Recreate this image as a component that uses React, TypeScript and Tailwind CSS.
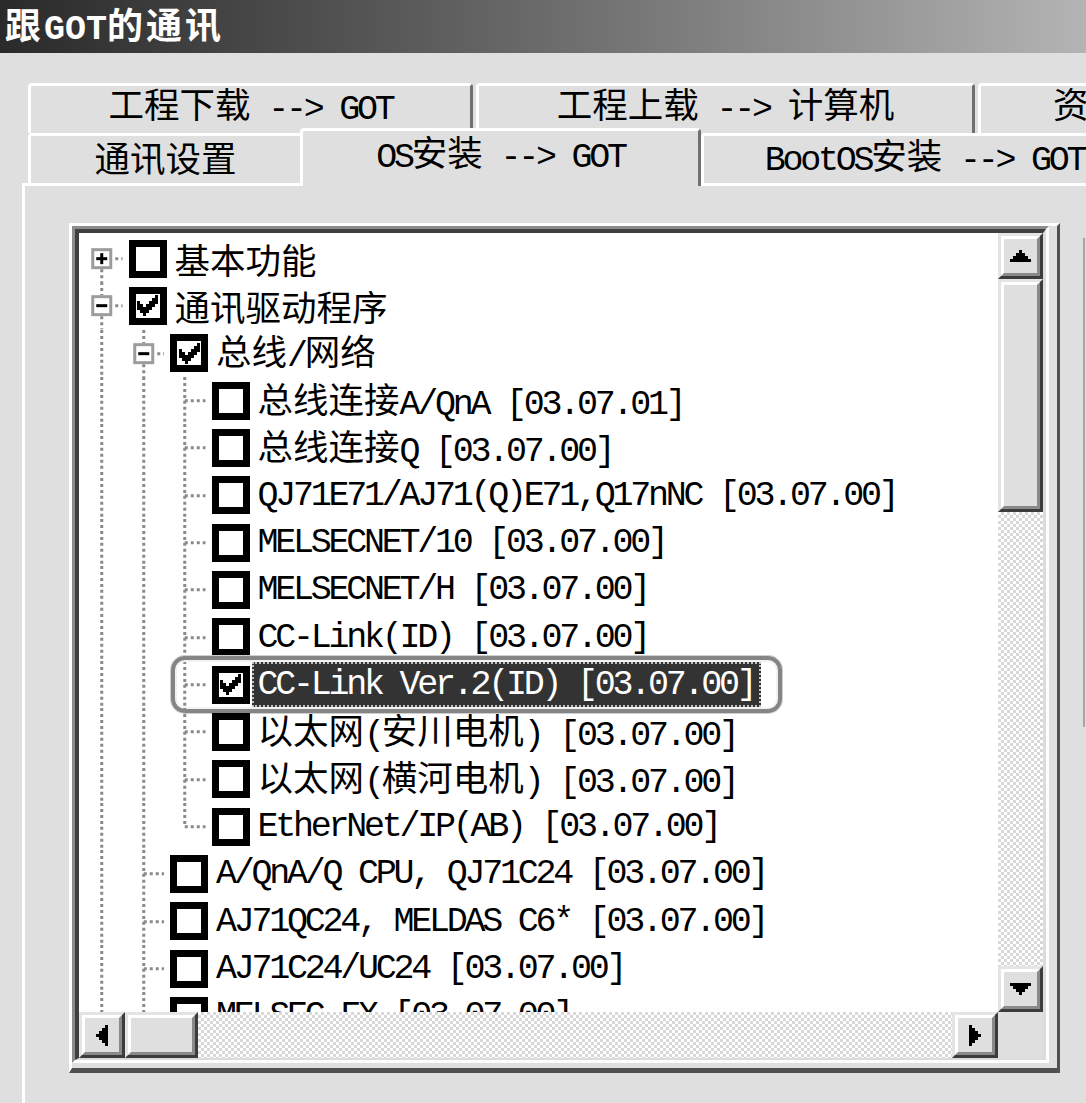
import React from "react";

const CJK_RE = /([\u2E80-\u9FFF\uF900-\uFAFF\uFF00-\uFFEF\u3000-\u303F]+)/;

function Txt({ s, cjk, lat }: { s: string; cjk: string; lat: string }) {
  const parts = s.split(CJK_RE).filter((p) => p.length > 0);
  return (
    <span className="whitespace-pre">
      {parts.map((p, i) =>
        CJK_RE.test(p) ? (
          <span key={i} className={cjk}>
            {p}
          </span>
        ) : (
          <span key={i} className={lat}>
            {p}
          </span>
        )
      )}
    </span>
  );
}

const TC = "font-['Noto_Sans_CJK_SC',sans-serif] text-[35.5px]";
const TL = "font-['Liberation_Mono',monospace] text-[35px] tracking-[-3.25px] relative top-[1px]";

type G = { up?: boolean; down?: boolean; stub?: boolean; box?: "+" | "-" };
const FULL: G = { up: true, down: true };
const TEE: G = { up: true, down: true, stub: true };
const END: G = { up: true, stub: true };
type R = { g: G[]; c?: boolean; t: string; sel?: boolean };

const ROWS: R[] = [
  { g: [{ down: true, stub: true, box: "+" }], t: "基本功能" },
  { g: [{ up: true, down: true, stub: true, box: "-" }], c: true, t: "通讯驱动程序" },
  { g: [FULL, { up: true, down: true, stub: true, box: "-" }], c: true, t: "总线/网络" },
  { g: [FULL, FULL, TEE], t: "总线连接A/QnA [03.07.01]" },
  { g: [FULL, FULL, TEE], t: "总线连接Q [03.07.00]" },
  { g: [FULL, FULL, TEE], t: "QJ71E71/AJ71(Q)E71,Q17nNC [03.07.00]" },
  { g: [FULL, FULL, TEE], t: "MELSECNET/10 [03.07.00]" },
  { g: [FULL, FULL, TEE], t: "MELSECNET/H [03.07.00]" },
  { g: [FULL, FULL, TEE], t: "CC-Link(ID) [03.07.00]" },
  { g: [FULL, FULL, TEE], c: true, t: "CC-Link Ver.2(ID) [03.07.00]", sel: true },
  { g: [FULL, FULL, TEE], t: "以太网(安川电机) [03.07.00]" },
  { g: [FULL, FULL, TEE], t: "以太网(横河电机) [03.07.00]" },
  { g: [FULL, FULL, END], t: "EtherNet/IP(AB) [03.07.00]" },
  { g: [FULL, TEE], t: "A/QnA/Q CPU, QJ71C24 [03.07.00]" },
  { g: [FULL, TEE], t: "AJ71QC24, MELDAS C6* [03.07.00]" },
  { g: [FULL, TEE], t: "AJ71C24/UC24 [03.07.00]" },
  { g: [FULL, TEE], t: "MELSEC-FX [03.07.00]" },
];

function Guide({ g }: { g: G }) {
  const W = 41.5,
    H = 47.33,
    cx = 20.75,
    cy = 23.67;
  const half = g.box ? 10.5 : 0;
  const dot = { stroke: "#8a8a8a", strokeWidth: 3, strokeDasharray: "3 3" };
  return (
    <svg width={W} height={H} className="block shrink-0">
      {g.up && <line x1={cx} y1={0} x2={cx} y2={cy - half} {...dot} />}
      {g.down && <line x1={cx} y1={cy + half} x2={cx} y2={H} {...dot} />}
      {g.stub && <line x1={cx + half + (g.box ? 3 : 0)} y1={cy} x2={W} y2={cy} {...dot} />}
      {g.box && (
        <g>
          <rect x={cx - 9} y={cy - 9} width={18} height={18} fill="#fff" stroke="#9c9c9c" strokeWidth={3} />
          <line x1={cx - 5.5} y1={cy} x2={cx + 5.5} y2={cy} stroke="#000" strokeWidth={3} />
          {g.box === "+" && <line x1={cx} y1={cy - 5.5} x2={cx} y2={cy + 5.5} stroke="#000" strokeWidth={3} />}
        </g>
      )}
    </svg>
  );
}

const CHECK: [number, number][] = [
  [6, 0],
  [5, 1],
  [6, 1],
  [0, 2],
  [4, 2],
  [5, 2],
  [6, 2],
  [0, 3],
  [1, 3],
  [3, 3],
  [4, 3],
  [5, 3],
  [0, 4],
  [1, 4],
  [2, 4],
  [3, 4],
  [4, 4],
  [1, 5],
  [2, 5],
  [3, 5],
  [2, 6],
];

function Box({ checked }: { checked?: boolean }) {
  return (
    <div className="w-[38px] h-[38px] border-[7px] border-black bg-white flex items-center justify-center shrink-0">
      {checked && (
        <svg width="21" height="21" viewBox="0 0 7 7" shapeRendering="crispEdges">
          {CHECK.map(([x, y]) => (
            <rect key={`${x}-${y}`} x={x} y={y} width="1" height="1" fill="#000" />
          ))}
        </svg>
      )}
    </div>
  );
}

function SBtn({ className, children }: { className: string; children?: React.ReactNode }) {
  return (
    <div
      className={`shrink-0 border-t-[3px] border-l-[3px] border-r-[3px] border-b-[3px] border-t-[#e4e4e4] border-l-[#e4e4e4] border-r-[#3c3c3c] border-b-[#3c3c3c] ${className}`}
    >
      <div className="w-full h-full border-t-[3px] border-l-[3px] border-r-[3px] border-b-[3px] border-t-white border-l-white border-r-[#8a8a8a] border-b-[#8a8a8a] bg-[#dfdfdf] flex items-center justify-center">
        {children}
      </div>
    </div>
  );
}

function Arrow({ dir }: { dir: "up" | "down" | "left" | "right" }) {
  const v = dir === "up" || dir === "down";
  const rects: [number, number, number, number][] =
    dir === "up"
      ? [
          [3, 0, 1, 1],
          [2, 1, 3, 1],
          [1, 2, 5, 1],
          [0, 3, 7, 1],
        ]
      : dir === "down"
      ? [
          [0, 0, 7, 1],
          [1, 1, 5, 1],
          [2, 2, 3, 1],
          [3, 3, 1, 1],
        ]
      : dir === "left"
      ? [
          [0, 3, 1, 1],
          [1, 2, 1, 3],
          [2, 1, 1, 5],
          [3, 0, 1, 7],
        ]
      : [
          [0, 0, 1, 7],
          [1, 1, 1, 5],
          [2, 2, 1, 3],
          [3, 3, 1, 1],
        ];
  return (
    <svg
      width={v ? 21 : 12}
      height={v ? 12 : 21}
      viewBox={v ? "0 0 7 4" : "0 0 4 7"}
      shapeRendering="crispEdges"
    >
      {rects.map(([x, y, w, h], i) => (
        <rect key={i} x={x} y={y} width={w} height={h} fill="#000" />
      ))}
    </svg>
  );
}

const TRACK =
  "bg-[image:repeating-conic-gradient(#d8d8d8_0%_25%,#ffffff_0%_50%)] bg-[length:6px_6px]";

function TreeRow({ r }: { r: R }) {
  return (
    <div className="relative flex items-center h-[47.33px] w-max">
      {r.g.map((g, i) => (
        <Guide key={i} g={g} />
      ))}
      <div className="ml-[6px]">
        <Box checked={r.c} />
      </div>
      {r.sel ? (
        <div className="ml-[2px] h-[45px] px-[4px] flex items-center leading-none shrink-0 bg-[#333333] text-white border-[2px] border-dotted border-[#c4c4c4]">
          <Txt s={r.t} cjk={TC} lat={TL} />
        </div>
      ) : (
        <div className="ml-[2px] h-[45px] px-[6px] flex items-center leading-none shrink-0 text-black">
          <Txt s={r.t} cjk={TC} lat={TL} />
        </div>
      )}
      {r.sel && (
        <div className="absolute left-[90px] -top-[5px] w-[611px] h-[57px] rounded-[14px] border-[4px] border-[#858585] shadow-[inset_0_0_0_2px_#f2f2f2,0_0_0_1px_#cfcfcf]" />
      )}
    </div>
  );
}

const TAB =
  "bg-[#dfdfdf] border-t-[3px] border-l-[3px] border-r-[3px] border-t-white border-l-white border-r-[#707070] rounded-tl-[4px] rounded-tr-[4px] flex items-center leading-none text-black shrink-0";

export default function App() {
  return (
    <div className="w-[1086px] h-[1103px] overflow-hidden bg-[#dfdfdf] relative">
      {/* Title bar */}
      <div className="h-[53px] bg-gradient-to-r from-[#2a2a2a] to-[#b4b4b4] flex items-center pl-[5px] text-white leading-none">
        <Txt
          s="跟GOT的通讯"
          cjk="font-['Noto_Sans_CJK_SC',sans-serif] text-[36px] font-bold tracking-[3px]"
          lat="font-['Liberation_Mono',monospace] text-[35px] font-bold"
        />
      </div>

      {/* Tabs */}
      <div className="mt-[30px]">
        <div className="flex h-[50px] pl-[28px]">
          <div className={`${TAB} w-[445px] justify-center pb-[8px]`}>
            <Txt s="工程下载 --> GOT" cjk={TC} lat={TL} />
          </div>
          <div className={`${TAB} ml-[3px] w-[499px] justify-center pb-[8px]`}>
            <Txt s="工程上载 --> 计算机" cjk={TC} lat={TL} />
          </div>
          <div className={`${TAB} ml-[3px] w-[420px] justify-start pl-[72px] pb-[8px]`}>
            <Txt s="资源数据 --> 计算机" cjk={TC} lat={TL} />
          </div>
        </div>
        <div className="flex items-start h-[50px] pl-[28px]">
          <div className={`${TAB} w-[275px] h-[50px] justify-center pb-[6px]`}>
            <Txt s="通讯设置" cjk={TC} lat={TL} />
          </div>
          <div className={`${TAB} relative z-10 -ml-[3px] -mt-[5px] w-[401px] h-[58px] justify-center pb-[10px]`}>
            <Txt s="OS安装 --> GOT" cjk={TC} lat={TL} />
          </div>
          <div className={`${TAB} w-[447px] h-[50px] justify-center pb-[6px]`}>
            <Txt s="BootOS安装 --> GOT" cjk={TC} lat={TL} />
          </div>
        </div>
      </div>

      {/* Panel */}
      <div className="ml-[22px] w-[1100px] h-[960px] border-t-[3px] border-l-[3px] border-t-white border-l-white pt-[37px] pl-[44px] flex items-start">
        {/* Tree frame */}
        <div className="w-[991px] h-[850px] shrink-0 flex flex-col border-t-[3px] border-l-[3px] border-r-[3px] border-b-[5px] border-t-white border-l-white border-r-[#505050] border-b-[#505050] pr-[8px] pb-[5px]">
          <div className="flex-1 min-h-0 flex flex-col border-t-[3px] border-l-[3px] border-r-[3px] border-b-[3px] border-t-[#8c8c8c] border-l-[#8c8c8c] border-r-white border-b-white">
            <div className="flex-1 min-h-0 flex flex-col border-t-[4px] border-l-[4px] border-r-[3px] border-b-[2px] border-t-[#3f3f3f] border-l-[#3f3f3f] border-r-[#dcdcdc] border-b-[#dcdcdc] bg-white">
              <div className="flex-1 min-h-0 grid grid-cols-[1fr_45px] grid-rows-[1fr_46px]">
                {/* Tree content */}
                <div className="overflow-hidden bg-white pt-[2px] pl-[2px] min-h-0 min-w-0">
                  {ROWS.map((r, i) => (
                    <TreeRow key={i} r={r} />
                  ))}
                </div>
                {/* Vertical scrollbar */}
                <div className="flex flex-col min-h-0">
                  <SBtn className="h-[46px]">
                    <Arrow dir="up" />
                  </SBtn>
                  <SBtn className="h-[233px]" />
                  <div className={`flex-1 ${TRACK}`} />
                  <SBtn className="h-[46px]">
                    <Arrow dir="down" />
                  </SBtn>
                </div>
                {/* Horizontal scrollbar */}
                <div className="flex min-w-0">
                  <SBtn className="w-[46px]">
                    <Arrow dir="left" />
                  </SBtn>
                  <SBtn className="w-[73px]" />
                  <div className={`flex-1 ${TRACK}`} />
                  <SBtn className="w-[46px]">
                    <Arrow dir="right" />
                  </SBtn>
                </div>
                <div className="bg-[#dfdfdf]" />
              </div>
            </div>
          </div>
        </div>
        {/* Edge of the next control */}
        <div className="ml-[23px] mt-[15px] w-[2px] h-[489px] bg-[#a5a5a5] shrink-0" />
      </div>
    </div>
  );
}
